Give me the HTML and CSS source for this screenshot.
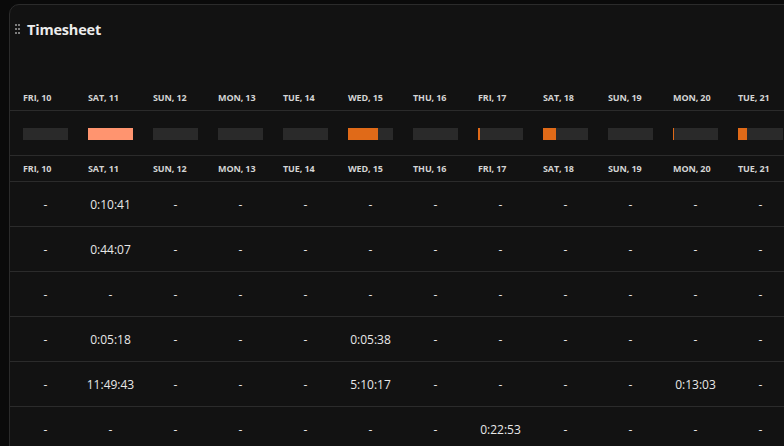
FILE: index.html
```html
<!DOCTYPE html>
<html>
<head>
<meta charset="utf-8">
<link rel="stylesheet" href="styles.css">
</head>
<body>
<div class="card">
  <div class="title-row">
    <svg class="handle" width="6" height="10" viewBox="0 0 6 10"><g fill="#b8b8b8"><rect x="0.2" y="0.2" width="1.6" height="1.6"/><rect x="3.2" y="0.2" width="1.6" height="1.6"/><rect x="0.2" y="4.2" width="1.6" height="1.6"/><rect x="3.2" y="4.2" width="1.6" height="1.6"/><rect x="0.2" y="8.2" width="1.6" height="1.6"/><rect x="3.2" y="8.2" width="1.6" height="1.6"/></g></svg>
    <span class="title">Timesheet</span>
  </div>
  <div class="table">
    <div class="row head">
      <div>FRI, 10</div><div>SAT, 11</div><div>SUN, 12</div><div>MON, 13</div><div>TUE, 14</div><div>WED, 15</div><div>THU, 16</div><div>FRI, 17</div><div>SAT, 18</div><div>SUN, 19</div><div>MON, 20</div><div>TUE, 21</div>
    </div>
    <div class="row bars">
      <div><div class="bar"></div></div>
      <div><div class="bar"><div class="fill full" style="width:100%"></div></div></div>
      <div><div class="bar"></div></div>
      <div><div class="bar"></div></div>
      <div><div class="bar"></div></div>
      <div><div class="bar"><div class="fill" style="width:30px"></div></div></div>
      <div><div class="bar"></div></div>
      <div><div class="bar"><div class="fill" style="width:2px"></div></div></div>
      <div><div class="bar"><div class="fill" style="width:13px"></div></div></div>
      <div><div class="bar"></div></div>
      <div><div class="bar"><div class="fill" style="width:1px"></div></div></div>
      <div><div class="bar"><div class="fill" style="width:9px"></div></div></div>
    </div>
    <div class="row head">
      <div>FRI, 10</div><div>SAT, 11</div><div>SUN, 12</div><div>MON, 13</div><div>TUE, 14</div><div>WED, 15</div><div>THU, 16</div><div>FRI, 17</div><div>SAT, 18</div><div>SUN, 19</div><div>MON, 20</div><div>TUE, 21</div>
    </div>
    <div class="row data">
      <div>-</div><div>0:10:41</div><div>-</div><div>-</div><div>-</div><div>-</div><div>-</div><div>-</div><div>-</div><div>-</div><div>-</div><div>-</div>
    </div>
    <div class="row data">
      <div>-</div><div>0:44:07</div><div>-</div><div>-</div><div>-</div><div>-</div><div>-</div><div>-</div><div>-</div><div>-</div><div>-</div><div>-</div>
    </div>
    <div class="row data">
      <div>-</div><div>-</div><div>-</div><div>-</div><div>-</div><div>-</div><div>-</div><div>-</div><div>-</div><div>-</div><div>-</div><div>-</div>
    </div>
    <div class="row data">
      <div>-</div><div>0:05:18</div><div>-</div><div>-</div><div>-</div><div>0:05:38</div><div>-</div><div>-</div><div>-</div><div>-</div><div>-</div><div>-</div>
    </div>
    <div class="row data">
      <div>-</div><div>11:49:43</div><div>-</div><div>-</div><div>-</div><div>5:10:17</div><div>-</div><div>-</div><div>-</div><div>-</div><div>0:13:03</div><div>-</div>
    </div>
    <div class="row data">
      <div>-</div><div>-</div><div>-</div><div>-</div><div>-</div><div>-</div><div>-</div><div>0:22:53</div><div>-</div><div>-</div><div>-</div><div>-</div>
    </div>
  </div>
</div>
</body>
</html>
```
FILE: styles.css
```css
html, body {
  margin: 0;
  padding: 0;
  background: #0a0a0a;
  overflow: hidden;
  width: 784px;
  height: 446px;
}
body {
  font-family: "Open Sans", "Noto Sans", sans-serif;
  color: #e6e6e6;
}
.card {
  margin: 4px 0 0 9px;
  width: 900px;
  height: 600px;
  background: #121212;
  border: 1px solid #2b2b2b;
  border-radius: 10px;
}
.title-row {
  display: flex;
  align-items: center;
  height: 20px;
  padding: 14px 0 0 5px;
}
.handle {
  display: block;
  margin-right: 6px;
  margin-top: 0px;
}
.title {
  font-size: 14.5px;
  font-weight: 700;
  color: #ececec;
  letter-spacing: -0.2px;
}
.table {
  margin-top: 46px;
}
.row {
  display: grid;
  grid-template-columns: repeat(12, 65px);
  padding-left: 3px;
  border-bottom: 1px solid #2b2b2b;
}
.head {
  height: 25px;
  align-items: center;
  font-size: 9px;
  font-weight: 700;
  color: #d4d4d4;
  letter-spacing: -0.1px;
}
.head > div {
  padding-left: 10px;
  white-space: nowrap;
}
.bars {
  height: 44px;
  align-items: center;
}
.bars > div {
  padding: 0 10px;
}
.bar {
  height: 12px;
  background: #2a2a2a;
  display: flex;
  margin-top: 1px;
}
.fill {
  height: 100%;
  background: #e06a18;
}
.fill.full {
  background: #ff946f;
}
.data {
  height: 44px;
  align-items: center;
  font-size: 12px;
  color: #e8e8e8;
}
.data > div {
  text-align: center;
}
```
